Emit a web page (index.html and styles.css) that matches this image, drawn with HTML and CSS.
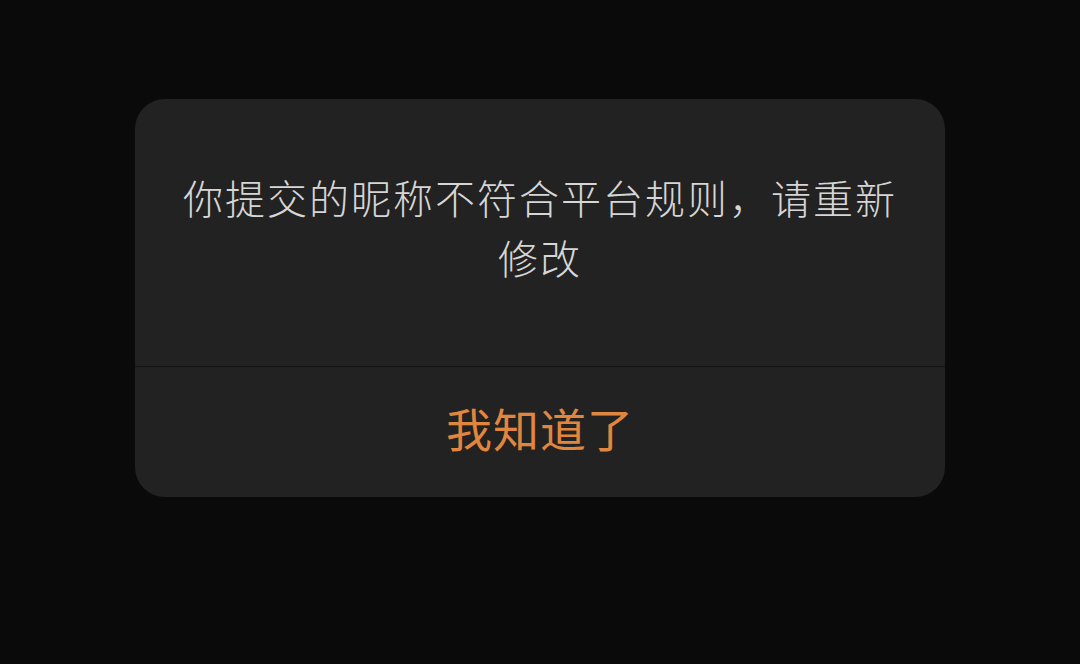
FILE: index.html
```html
<!DOCTYPE html>
<html lang="zh-CN">
<head>
<meta charset="utf-8">
<link rel="stylesheet" href="styles.css">
</head>
<body>
<div class="screen">
  <div class="dialog">
    <div class="dialog-body">
      <p class="message">你提交的昵称不符合平台规则，请重新修改</p>
    </div>
    <div class="dialog-footer">
      <button class="confirm">我知道了</button>
    </div>
  </div>
</div>
</body>
</html>
```
FILE: styles.css
```css
html, body {
  margin: 0;
  padding: 0;
  background: #0a0a0a;
}
.screen {
  width: 1080px;
  height: 664px;
  padding-top: 99px;
  box-sizing: border-box;
  font-family: "Noto Sans CJK SC", "Noto Sans", sans-serif;
}
.dialog {
  width: 810px;
  margin-left: 135px;
  background: #222222;
  border-radius: 30px;
  overflow: hidden;
}
.dialog-body {
  height: 267px;
  box-sizing: border-box;
  display: flex;
  align-items: center;
  justify-content: center;
  padding: 0 44px 11px;
}
.message {
  margin: 0;
  color: #d6d6d6;
  font-size: 40px;
  line-height: 60px;
  letter-spacing: 2px;
  font-weight: 300;
  text-align: center;
  width: 716px;
}
.dialog-footer {
  border-top: 1px solid #121212;
  height: 131px;
  box-sizing: border-box;
  padding-bottom: 10px;
  display: flex;
  align-items: center;
  justify-content: center;
}
.confirm {
  background: none;
  border: none;
  padding: 0;
  color: #e0863e;
  font-family: "Noto Sans CJK SC", "Noto Sans", sans-serif;
  font-size: 46px;
  font-weight: 400;
  letter-spacing: 1px;
}
```
